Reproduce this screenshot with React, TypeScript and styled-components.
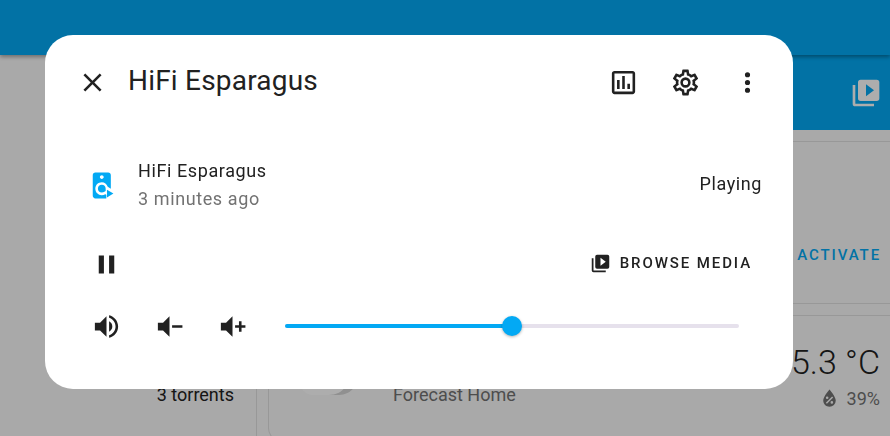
import styled, { createGlobalStyle } from "styled-components";

const mdi = {
  close: "M19,6.41L17.59,5L12,10.59L6.41,5L5,6.41L10.59,12L5,17.59L6.41,19L12,13.41L17.59,19L19,17.59L13.41,12L19,6.41Z",
  chart: "M9 17H7V10H9V17M13 17H11V7H13V17M17 17H15V13H17V17M19 19H5V5H19V19.1M19 3H5C3.9 3 3 3.9 3 5V19C3 20.1 3.9 21 5 21H19C20.1 21 21 20.1 21 19V5C21 3.9 20.1 3 19 3Z",
  cog: "M12,8A4,4 0 0,1 16,12A4,4 0 0,1 12,16A4,4 0 0,1 8,12A4,4 0 0,1 12,8M12,10A2,2 0 0,0 10,12A2,2 0 0,0 12,14A2,2 0 0,0 14,12A2,2 0 0,0 12,10M10,22C9.75,22 9.54,21.82 9.5,21.58L9.13,18.93C8.5,18.68 7.96,18.34 7.44,17.94L4.95,18.95C4.73,19.03 4.46,18.95 4.34,18.73L2.34,15.27C2.21,15.05 2.27,14.78 2.46,14.63L4.57,12.97L4.5,12L4.57,11L2.46,9.37C2.27,9.22 2.21,8.95 2.34,8.73L4.34,5.27C4.46,5.05 4.73,4.96 4.95,5.05L7.44,6.05C7.96,5.66 8.5,5.32 9.13,5.07L9.5,2.42C9.54,2.18 9.75,2 10,2H14C14.25,2 14.46,2.18 14.5,2.42L14.87,5.07C15.5,5.32 16.04,5.66 16.56,6.05L19.05,5.05C19.27,4.96 19.54,5.05 19.66,5.27L21.66,8.73C21.79,8.95 21.73,9.22 21.54,9.37L19.43,11L19.5,12L19.43,13L21.54,14.63C21.73,14.78 21.79,15.05 21.66,15.27L19.66,18.73C19.54,18.95 19.27,19.04 19.05,18.95L16.56,17.95C16.04,18.34 15.5,18.68 14.87,18.93L14.5,21.58C14.46,21.82 14.25,22 14,22H10M11.25,4L10.88,6.61C9.68,6.86 8.62,7.5 7.85,8.39L5.44,7.35L4.69,8.65L6.8,10.2C6.4,11.37 6.4,12.64 6.8,13.8L4.68,15.36L5.43,16.66L7.86,15.62C8.63,16.5 9.68,17.14 10.87,17.38L11.24,20H12.76L13.13,17.39C14.32,17.14 15.37,16.5 16.14,15.62L18.57,16.66L19.32,15.36L17.2,13.81C17.6,12.64 17.6,11.37 17.2,10.2L19.31,8.65L18.56,7.35L16.15,8.39C15.38,7.5 14.32,6.86 13.12,6.62L12.75,4H11.25Z",
  dots: "M12,16A2,2 0 0,1 14,18A2,2 0 0,1 12,20A2,2 0 0,1 10,18A2,2 0 0,1 12,16M12,10A2,2 0 0,1 14,12A2,2 0 0,1 12,14A2,2 0 0,1 10,12A2,2 0 0,1 12,10M12,4A2,2 0 0,1 14,6A2,2 0 0,1 12,8A2,2 0 0,1 10,6A2,2 0 0,1 12,4Z",
  pause: "M14,19H18V5H14M6,19H10V5H6V19Z",
  volumeHigh: "M14,3.23V5.29C16.89,6.15 19,8.83 19,12C19,15.17 16.89,17.84 14,18.7V20.77C18,19.86 21,16.28 21,12C21,7.72 18,4.14 14,3.23M16.5,12C16.5,10.23 15.5,8.71 14,7.97V16C15.5,15.29 16.5,13.76 16.5,12M3,9V15H7L12,20V4L7,9H3Z",
  volumeMinus: "M3,9H7L12,4V20L7,15H3V9M14,11H22V13H14V11Z",
  volumePlus: "M3,9H7L12,4V20L7,15H3V9M14,11H17V8H19V11H22V13H19V16H17V13H14V11Z",
  playBoxes: "M4 6H2V20A2 2 0 0 0 4 22H18V20H4V6M20 2H8A2 2 0 0 0 6 4V16A2 2 0 0 0 8 18H20A2 2 0 0 0 22 16V4A2 2 0 0 0 20 2M12 14.5V5.5L18 10L12 14.5Z",
  speakerPlay: "M8 2H18C19.1 2 20 2.9 20 4V14.6L17.6 13C16.9 11 15.1 9.5 13 9.5C10.2 9.5 8 11.7 8 14.5C8 17.3 10.2 19.5 13 19.5C14 19.5 14.9 19.2 15.7 18.7L16.5 19.2V22H8C6.9 22 6 21.1 6 20V4C6 2.9 6.9 2 8 2M13 4C12.2 4 11.5 4.7 11.5 5.5C11.5 6.3 12.2 7 13 7C13.8 7 14.5 6.3 14.5 5.5C14.5 4.7 13.8 4 13 4M13 11.5C14.7 11.5 16 12.8 16 14.5V16.2L15 16.9C14.5 17.3 13.8 17.5 13 17.5C11.3 17.5 10 16.2 10 14.5C10 12.8 11.3 11.5 13 11.5M17 15.2L22 18.2L17 21.2V15.2Z",
  waterPercent: "M12,3.25C12,3.25 6,10 6,14C6,17.32 8.69,20 12,20A6,6 0 0,0 18,14C18,10 12,3.25 12,3.25M14.47,9.97L15.53,11.03L9.53,17.03L8.47,15.97M9.75,10A1.25,1.25 0 0,1 11,11.25A1.25,1.25 0 0,1 9.75,12.5A1.25,1.25 0 0,1 8.5,11.25A1.25,1.25 0 0,1 9.75,10M14.25,14.5A1.25,1.25 0 0,1 15.5,15.75A1.25,1.25 0 0,1 14.25,17A1.25,1.25 0 0,1 13,15.75A1.25,1.25 0 0,1 14.25,14.5Z",
};

function Icon({ path, size = 31 }: { path: string; size?: number }) {
  return (
    <svg width={size} height={size} viewBox="0 0 24 24" fill="currentColor">
      <path d={path} />
    </svg>
  );
}

export default function App() {
  return (
    <>
      <GlobalStyle />
      <Page>
        <TopBar />
        <Content>
          <SideColumn>
            <SideNote>3 torrents</SideNote>
          </SideColumn>
          <MainColumn>
            <MediaBar>
              <Icon path={mdi.playBoxes} size={32} />
            </MediaBar>
            <SceneCard>
              <ActivateLabel>ACTIVATE</ActivateLabel>
            </SceneCard>
            <WeatherCard>
              <WeatherArt width="64" height="30" viewBox="0 0 64 30">
                <path d="M0 0H52C52 18 44 29 30 29H14C6 29 0 22 0 14Z" fill="#fff" />
                <path d="M52 0H62C62 18 52 29 40 29H30C44 29 52 18 52 0Z" fill="#d4d4d4" />
              </WeatherArt>
              <WeatherName>Forecast Home</WeatherName>
              <WeatherValues>
                <Temperature>15.3 °C</Temperature>
                <Humidity>
                  <Icon path={mdi.waterPercent} size={25} />
                  39%
                </Humidity>
              </WeatherValues>
            </WeatherCard>
          </MainColumn>
        </Content>
        <Scrim />
        <Dialog>
          <DialogHeader>
            <IconButton>
              <Icon path={mdi.close} />
            </IconButton>
            <Title>HiFi Esparagus</Title>
            <HeaderActions>
              <IconButton>
                <Icon path={mdi.chart} />
              </IconButton>
              <IconButton>
                <Icon path={mdi.cog} />
              </IconButton>
              <IconButton>
                <Icon path={mdi.dots} />
              </IconButton>
            </HeaderActions>
          </DialogHeader>

          <StateRow>
            <StateIcon>
              <Icon path={mdi.speakerPlay} />
            </StateIcon>
            <StateInfo>
              <StateName>HiFi Esparagus</StateName>
              <StateTime>3 minutes ago</StateTime>
            </StateInfo>
            <StateValue>Playing</StateValue>
          </StateRow>

          <ControlsRow>
            <IconButton>
              <Icon path={mdi.pause} />
            </IconButton>
            <BrowseButton>
              <Icon path={mdi.playBoxes} size={21} />
              BROWSE MEDIA
            </BrowseButton>
          </ControlsRow>

          <VolumeRow>
            <VolumeButtons>
              <IconButton>
                <Icon path={mdi.volumeHigh} />
              </IconButton>
              <IconButton>
                <Icon path={mdi.volumeMinus} />
              </IconButton>
              <IconButton>
                <Icon path={mdi.volumePlus} />
              </IconButton>
            </VolumeButtons>
            <SliderTrack>
              <SliderFill $value={50} />
              <SliderThumb $value={50} />
            </SliderTrack>
          </VolumeRow>
        </Dialog>
      </Page>
    </>
  );
}

const GlobalStyle = createGlobalStyle`
  html, body {
    margin: 0;
    padding: 0;
  }
  body {
    font-family: Roboto, "Liberation Sans", sans-serif;
    background: #fafafa;
    color: #212121;
  }
`;
const Page = styled.div`
  width: 890px;
  height: 436px;
  overflow: hidden;
  background: #fafafa;
`;
const TopBar = styled.div`
  position: relative;
  z-index: 1;
  height: 55px;
  background: #03a9f4;
  box-shadow: 0 2px 4px rgba(0, 0, 0, 0.35);
`;
const Content = styled.div`
  display: flex;
  height: 381px;
`;
const SideColumn = styled.div`
  box-sizing: border-box;
  width: 257px;
  flex-shrink: 0;
  padding: 0 22px 31px 0;
  border-right: 1px solid #e0e0e0;
  display: flex;
  flex-direction: column;
  justify-content: flex-end;
  align-items: flex-end;
`;
const SideNote = styled.div`
  font-size: 18px;
  line-height: 20px;
`;
const MainColumn = styled.div`
  flex: 1;
  margin-left: 11px;
  display: flex;
  flex-direction: column;
  min-width: 0;
`;
const MediaBar = styled.div`
  height: 75px;
  flex-shrink: 0;
  background: #03a9f4;
  color: #fff;
  display: flex;
  align-items: center;
  justify-content: flex-end;
  padding-right: 8px;
`;
const SceneCard = styled.div`
  box-sizing: border-box;
  height: 163px;
  flex-shrink: 0;
  margin-top: 11px;
  border-top: 1px solid #e0e0e0;
  border-bottom: 1px solid #e0e0e0;
  display: flex;
  justify-content: flex-end;
  padding: 103px 9px 0 0;
`;
const ActivateLabel = styled.span`
  font-size: 15px;
  font-weight: 500;
  line-height: 20px;
  letter-spacing: 1.9px;
  color: #03a9f4;
`;
const WeatherCard = styled.div`
  box-sizing: border-box;
  height: 127px;
  margin-top: 11px;
  flex-shrink: 0;
  border-top: 1px solid #e0e0e0;
  border-left: 1px solid #e0e0e0;
  border-bottom: 1px solid #e0e0e0;
  border-bottom-left-radius: 14px;
  display: flex;
  align-items: flex-start;
  padding: 0 10px 0 30px;
`;
const WeatherArt = styled.svg`
  flex-shrink: 0;
  margin-top: 50px;
`;
const WeatherName = styled.div`
  margin: 68px 0 0 30px;
  font-size: 18px;
  line-height: 22px;
  color: #727272;
`;
const WeatherValues = styled.div`
  margin-left: auto;
  display: flex;
  flex-direction: column;
  align-items: flex-end;
`;
const Temperature = styled.div`
  margin-top: 26px;
  font-size: 34px;
  font-weight: 300;
  line-height: 40px;
  white-space: nowrap;
`;
const Humidity = styled.div`
  margin-top: 4px;
  display: flex;
  align-items: center;
  gap: 5px;
  font-size: 18px;
  line-height: 24px;
  color: #727272;
`;
const Scrim = styled.div`
  position: fixed;
  inset: 0;
  z-index: 2;
  background: rgba(0, 0, 0, 0.32);
`;
const Dialog = styled.div`
  position: fixed;
  z-index: 3;
  left: 45px;
  top: 35px;
  width: 748px;
  height: 354px;
  box-sizing: border-box;
  border-radius: 28px;
  background: #fff;
  padding-top: 23px;
  display: flex;
  flex-direction: column;
`;
const IconButton = styled.button`
  width: 48px;
  height: 48px;
  padding: 0;
  border: 0;
  background: none;
  color: #212121;
  display: flex;
  align-items: center;
  justify-content: center;
  flex-shrink: 0;
`;
const DialogHeader = styled.div`
  display: flex;
  align-items: center;
  height: 48px;
  padding: 0 22px 0 23px;
`;
const Title = styled.h2`
  margin: 0 0 2px 12px;
  font-size: 28px;
  font-weight: 400;
  line-height: 32px;
  letter-spacing: 0.2px;
  color: #212121;
`;
const HeaderActions = styled.div`
  margin-left: auto;
  display: flex;
  gap: 14px;
`;
const StateRow = styled.div`
  margin-top: 51px;
  padding: 0 31px 0 40px;
  display: flex;
  align-items: center;
`;
const StateIcon = styled.div`
  width: 31px;
  height: 31px;
  color: #03a9f4;
`;
const StateInfo = styled.div`
  margin-left: 22px;
  flex: 1;
`;
const StateName = styled.div`
  font-size: 18px;
  line-height: 28px;
  letter-spacing: 0.6px;
  color: #212121;
`;
const StateTime = styled.div`
  font-size: 18px;
  line-height: 28px;
  letter-spacing: 0.6px;
  color: #727272;
`;
const StateValue = styled.div`
  margin-bottom: 2px;
  font-size: 18px;
  line-height: 24px;
  letter-spacing: 0.6px;
  color: #212121;
`;
const ControlsRow = styled.div`
  margin-top: 27px;
  padding: 0 33px 0 37px;
  display: flex;
  align-items: center;
  justify-content: space-between;
`;
const BrowseButton = styled.button`
  height: 36px;
  margin-bottom: 2px;
  padding: 0 8px;
  border: 0;
  background: none;
  display: flex;
  align-items: center;
  gap: 9px;
  font-family: inherit;
  font-size: 15px;
  font-weight: 500;
  letter-spacing: 1.9px;
  color: #212121;
`;
const VolumeRow = styled.div`
  margin-top: 14px;
  padding: 0 54px 0 37px;
  display: flex;
  align-items: center;
`;
const VolumeButtons = styled.div`
  display: flex;
  gap: 15px;
`;
const SliderTrack = styled.div`
  position: relative;
  flex: 1;
  height: 4px;
  margin-left: 29px;
  border-radius: 2px;
  background: #e6e1ec;
`;
const SliderFill = styled.div<{ $value: number }>`
  height: 100%;
  width: ${(p) => p.$value}%;
  border-radius: 2px;
  background: #03a9f4;
`;
const SliderThumb = styled.div<{ $value: number }>`
  position: absolute;
  top: 50%;
  left: ${(p) => p.$value}%;
  width: 20px;
  height: 20px;
  border-radius: 50%;
  background: #03a9f4;
  transform: translate(-50%, -50%);
  box-shadow: 0 1px 3px rgba(0, 0, 0, 0.3);
`;
